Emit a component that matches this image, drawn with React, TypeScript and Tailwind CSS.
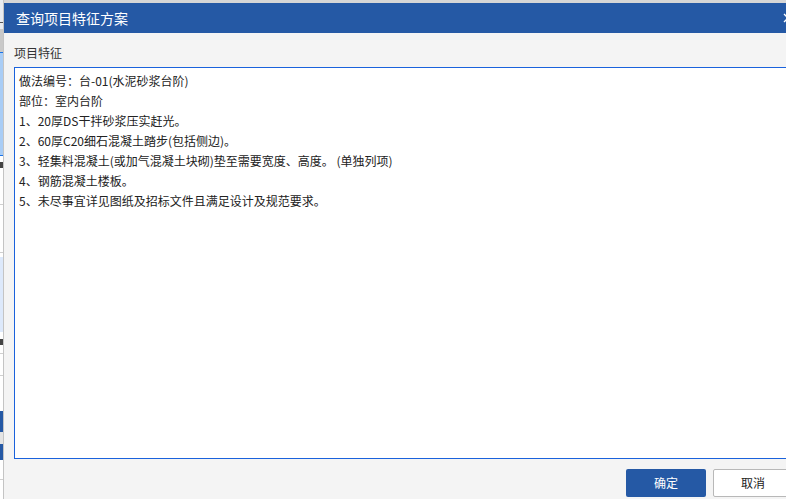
const LINES = [
  '做法编号：台-01(水泥砂浆台阶)',
  '部位：室内台阶',
  '1、20厚DS干拌砂浆压实赶光。',
  '2、60厚C20细石混凝土踏步(包括侧边)。',
  '3、轻集料混凝土(或加气混凝土块砌)垫至需要宽度、高度。 (单独列项)',
  '4、钢筋混凝土楼板。',
  '5、未尽事宜详见图纸及招标文件且满足设计及规范要求。',
]

// sliver of the app window behind the dialog
function BackStrip() {
  return (
    <div className="flex w-[3px] shrink-0 flex-col bg-white">
      <div className="h-[22px] bg-[#e9ecf0]" />
      <div className="h-px bg-[#555]" />
      <div className="h-[6px] bg-[#e9ecf0]" />
      <div className="h-[23px] bg-[#c9c9c9]" />
      <div className="h-px bg-[#1a73e8]" />
      <div className="h-[102px] bg-[#a9cdf6]" />
      <div className="h-px bg-[#1a73e8]" />
      <div className="h-[6px]" />
      <div className="h-[6px] bg-[#444]" />
      <div className="h-[36px]" />
      <div className="h-px bg-[#cfcfcf]" />
      <div className="h-[47px]" />
      <div className="h-px bg-[#cfcfcf]" />
      <div className="h-[4px]" />
      <div className="h-[75px] bg-[#dde9fb]" />
      <div className="h-[7px]" />
      <div className="h-[6px] bg-[#444]" />
      <div className="h-[8px]" />
      <div className="h-px bg-[#cfcfcf]" />
      <div className="h-[21px]" />
      <div className="h-px bg-[#cfcfcf]" />
      <div className="h-[35px]" />
      <div className="h-[21px] bg-[#2559a5]" />
      <div className="h-[12px] bg-[#e4e4e4]" />
      <div className="h-[16px] bg-[#2559a5]" />
      <div className="h-[19px]" />
      <div className="h-px bg-[#cfcfcf]" />
      <div className="flex-1" />
    </div>
  )
}

export default function App() {
  return (
    <div
      className="flex h-[499px] w-[786px] overflow-hidden bg-white text-[#222]"
      style={{ fontFamily: '"Microsoft YaHei", "Noto Sans CJK SC", "Noto Sans", sans-serif' }}
    >
      <BackStrip />

      {/* Dialog */}
      <div className="flex w-[800px] shrink-0 flex-col border-l border-[#c4c4c4] bg-[#f4f4f4]">
        <div className="h-[3px] bg-[#d6d6d6]" />

        {/* Title bar */}
        <div className="flex h-[30px] items-center justify-between bg-[#2559a5] pl-[12px] pr-[10px]">
          <span className="text-[14px] leading-[20px] text-white">查询项目特征方案</span>
          <svg className="h-[10px] w-[10px] text-white" viewBox="0 0 10 10" fill="none" stroke="currentColor" strokeWidth={1.3}>
            <path d="M1 1l8 8M9 1l-8 8" />
          </svg>
        </div>

        {/* Body */}
        <div className="flex flex-1 flex-col pl-[10px] pr-[10px]">
          <div className="h-[34px] pt-[10px] text-[12px] leading-[20px] text-[#333]">项目特征</div>

          <div className="h-[392px] border border-[#1a62dc] bg-white pl-[4px] pt-[3px] text-[12px] leading-[20px]">
            {LINES.map((l) => (
              <div key={l} className="whitespace-pre">
                {l}
              </div>
            ))}
          </div>

          {/* Footer */}
          <div className="flex justify-end gap-[7px] pt-[10px]">
            <button className="flex h-[28px] w-[80px] items-center justify-center rounded-[2px] bg-[#2559a5] text-[12px] text-white">
              确定
            </button>
            <button className="flex h-[28px] w-[80px] items-center justify-center rounded-[2px] border border-[#b8b8b8] bg-white text-[12px] text-[#222]">
              取消
            </button>
          </div>
        </div>
      </div>
    </div>
  )
}
